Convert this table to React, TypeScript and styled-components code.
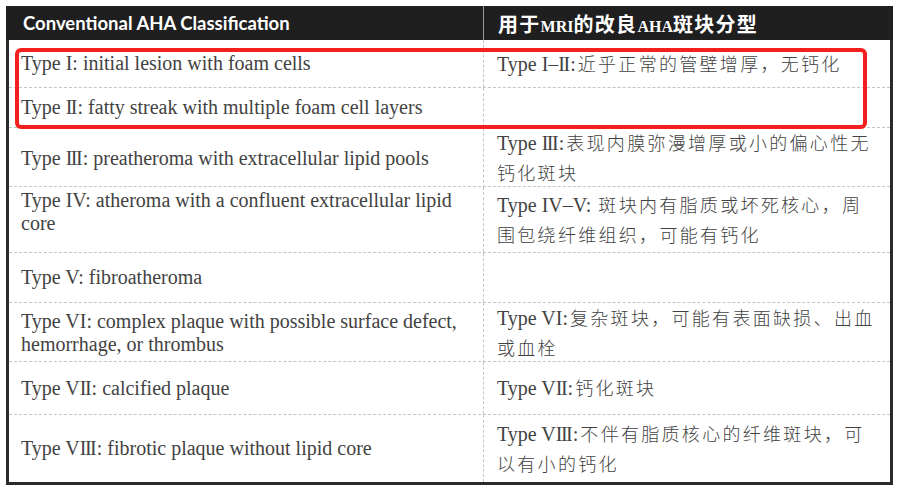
import React, { FC, ReactNode } from "react";
import styled, { createGlobalStyle } from "styled-components";

const GlobalStyle = createGlobalStyle`
  html, body { margin: 0; padding: 0; background: #fff; }
`;

const Page = styled.div({
  padding: "6px 0 0 6px",
});

const Table = styled.div({
  position: "relative",
  width: 887,
});

const HeaderRow = styled.div({
  display: "grid",
  gridTemplateColumns: "477px 1fr",
  height: 34,
  background: "#1f1f1f",
  color: "#fff",
});

const HeaderCell = styled.div<{ $divider?: boolean }>(({ $divider }) => ({
  display: "flex",
  alignItems: "center",
  paddingLeft: $divider ? 14 : 17,
  borderLeft: $divider ? "1px solid #9a9a9a" : "none",
  fontFamily: $divider
    ? '"Liberation Serif", "Noto Sans CJK SC", serif'
    : 'Lato, "Open Sans", sans-serif',
  fontWeight: 700,
  fontSize: $divider ? 20 : 18.5,
  letterSpacing: $divider ? 1.3 : 0,
  whiteSpace: "nowrap",
}));

const SmallCaps = styled.span({
  fontSize: 16,
  fontWeight: 700,
  fontFamily: '"Liberation Serif", serif',
  letterSpacing: 0,
});

const Body = styled.div({
  border: "3px solid #2b2b2b",
  borderTop: "none",
});

const Row = styled.div<{ $h: number; $last?: boolean }>(({ $h, $last }) => ({
  display: "grid",
  gridTemplateColumns: "474px 1fr",
  height: $h,
  borderBottom: $last ? "none" : "1px dashed #c4c4c4",
  boxSizing: "border-box",
}));

const Cell = styled.div<{ $right?: boolean; $top?: boolean }>(({ $right, $top }) => ({
  display: "flex",
  alignItems: $top ? "flex-start" : "center",
  paddingTop: $top ? 2 : 0,
  paddingLeft: $right ? 13 : 12,
  borderLeft: $right ? "1px dashed #c4c4c4" : "none",
  color: "#424242",
  fontFamily: '"Liberation Serif", "Noto Sans CJK SC", serif',
  fontSize: 20,
  lineHeight: $right ? "29px" : "23px",
  whiteSpace: "nowrap",
}));

const Roman = styled.span({
  letterSpacing: -1.5,
  marginRight: 1.5,
});

// Chinese runs: wider tracking than the Latin part of the cell
const Han = styled.span<{ $wrap?: boolean }>(({ $wrap }) => ({
  fontFamily: '"Noto Sans CJK SC", sans-serif',
  fontSize: 18,
  letterSpacing: 2.3,
  fontWeight: 300,
  marginLeft: $wrap ? 0 : 2,
}));

const Highlight = styled.div({
  position: "absolute",
  left: 9,
  top: 42,
  width: 852,
  height: 81,
  border: "4px solid #f4201e",
  borderRadius: 6,
  boxSizing: "border-box",
  pointerEvents: "none",
});

interface RowData {
  h: number;
  left: ReactNode;
  right?: ReactNode;
  top?: boolean;
}

const rows: RowData[] = [
  {
    h: 48,
    left: "Type I: initial lesion with foam cells",
    right: <>Type I–<Roman>II</Roman>:<Han>近乎正常的管壁增厚，无钙化</Han></>,
  },
  { h: 40, left: <>Type <Roman>II</Roman>: fatty streak with multiple foam cell layers</> },
  {
    h: 59,
    left: <>Type <Roman>III</Roman>: preatheroma with extracellular lipid pools</>,
    right: (
      <>
        Type <Roman>III</Roman>:<Han>表现内膜弥漫增厚或小的偏心性无</Han>
        <br />
        <Han $wrap>钙化斑块</Han>
      </>
    ),
  },
  {
    h: 66,
    top: true,
    left: (
      <>
        Type IV: atheroma with a confluent extracellular lipid
        <br />
        core
      </>
    ),
    right: (
      <>
        Type IV–V: <Han>斑块内有脂质或坏死核心，周</Han>
        <br />
        <Han $wrap>围包绕纤维组织，可能有钙化</Han>
      </>
    ),
  },
  { h: 50, left: "Type V: fibroatheroma" },
  {
    h: 59,
    left: (
      <>
        Type VI: complex plaque with possible surface defect,
        <br />
        hemorrhage, or thrombus
      </>
    ),
    right: (
      <>
        Type VI:<Han>复杂斑块，可能有表面缺损、出血</Han>
        <br />
        <Han $wrap>或血栓</Han>
      </>
    ),
  },
  {
    h: 53,
    left: <>Type V<Roman>II</Roman>: calcified plaque</>,
    right: <>Type V<Roman>II</Roman>:<Han>钙化斑块</Han></>,
  },
  {
    h: 67,
    left: <>Type V<Roman>III</Roman>: fibrotic plaque without lipid core</>,
    right: (
      <>
        Type V<Roman>III</Roman>:<Han>不伴有脂质核心的纤维斑块，可</Han>
        <br />
        <Han $wrap>以有小的钙化</Han>
      </>
    ),
  },
];

const App: FC = () => (
  <>
    <GlobalStyle />
    <Page>
      <Table>
        <HeaderRow>
          <HeaderCell>Conventional AHA Classification</HeaderCell>
          <HeaderCell $divider>
            <span>
              用于<SmallCaps>MRI</SmallCaps>的改良<SmallCaps>AHA</SmallCaps>斑块分型
            </span>
          </HeaderCell>
        </HeaderRow>
        <Body>
          {rows.map((r, i) => (
            <Row key={i} $h={r.h} $last={i === rows.length - 1}>
              <Cell $top={r.top}>
                <div>{r.left}</div>
              </Cell>
              <Cell $right>
                <div>{r.right}</div>
              </Cell>
            </Row>
          ))}
        </Body>
        <Highlight />
      </Table>
    </Page>
  </>
);

export default App;
